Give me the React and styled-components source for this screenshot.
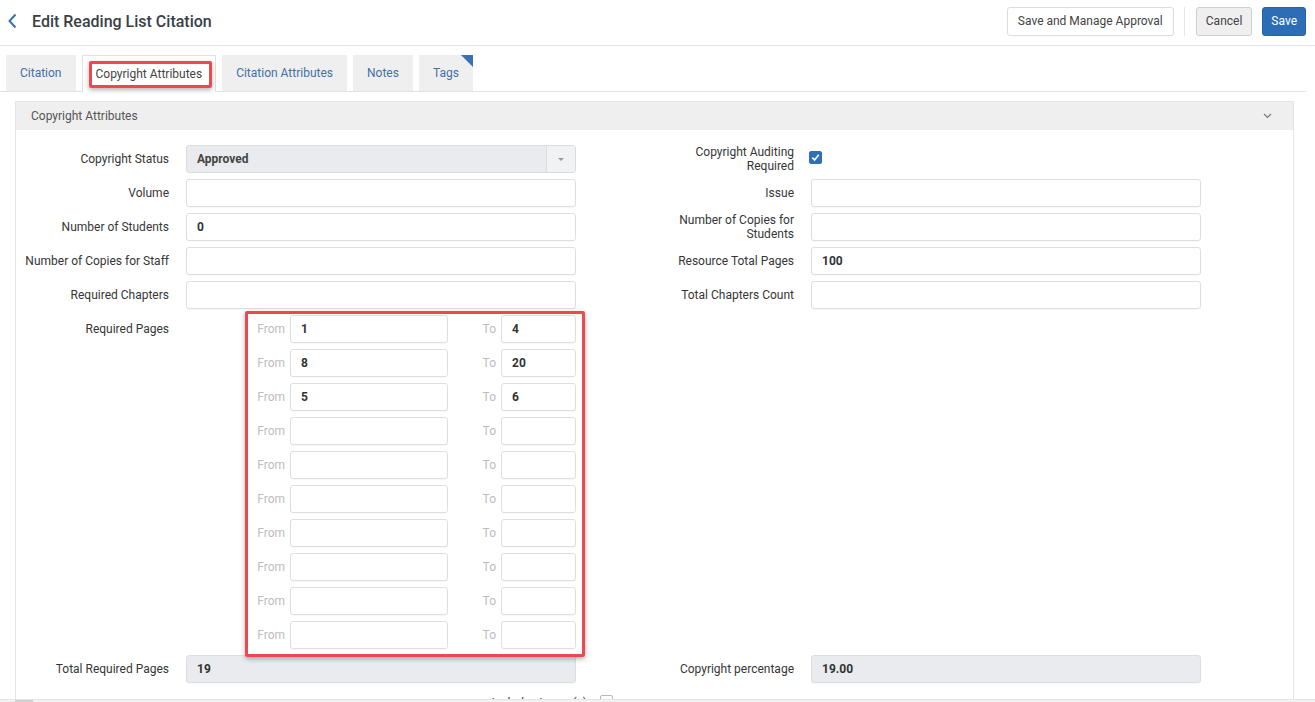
import styled, { createGlobalStyle, css } from "styled-components";

const GlobalStyle = createGlobalStyle`
  html, body {
    margin: 0;
    padding: 0;
    background: #fff;
  }
  * {
    box-sizing: border-box;
  }
`;

const leftFields = [
  { label: "Copyright Status", type: "select", value: "Approved" },
  { label: "Volume", value: "" },
  { label: "Number of Students", value: "0" },
  { label: "Number of Copies for Staff", value: "" },
  { label: "Required Chapters", value: "" },
];

const rightFields = [
  { label: "Copyright Auditing Required", type: "check" },
  { label: "Issue", value: "" },
  { label: "Number of Copies for Students", value: "" },
  { label: "Resource Total Pages", value: "100" },
  { label: "Total Chapters Count", value: "" },
];

const pageRanges = [
  ["1", "4"],
  ["8", "20"],
  ["5", "6"],
  ["", ""],
  ["", ""],
  ["", ""],
  ["", ""],
  ["", ""],
  ["", ""],
  ["", ""],
];

const tabs = [
  { name: "Citation" },
  { name: "Copyright Attributes", active: true },
  { name: "Citation Attributes" },
  { name: "Notes" },
  { name: "Tags", flagged: true },
];

const App = () => {
  const renderControl = (f) => {
    if (f.type === "select") {
      return (
        <SelectBox>
          <SelectValue>{f.value}</SelectValue>
          <SelectArrow>
            <Caret />
          </SelectArrow>
        </SelectBox>
      );
    }
    if (f.type === "check") {
      return (
        <CheckBox checked>
          <svg width="9" height="9" viewBox="0 0 10 10">
            <path d="M1.5 5.2 L4 7.8 L8.6 2" fill="none" stroke="#fff" strokeWidth="1.8" />
          </svg>
        </CheckBox>
      );
    }
    return <TextInput readOnly value={f.value} />;
  };

  return (
    <Page>
      <GlobalStyle />
      <Header>
        <BackButton>
          <svg width="9" height="16" viewBox="0 0 9 16">
            <path d="M7.5 1.5 L1.5 8 L7.5 14.5" fill="none" stroke="#3b6fb6" strokeWidth="2" />
          </svg>
        </BackButton>
        <Title>Edit Reading List Citation</Title>
        <Actions>
          <ActionButton>Save and Manage Approval</ActionButton>
          <Divider />
          <ActionButton $variant="grey">Cancel</ActionButton>
          <ActionButton $variant="primary">Save</ActionButton>
        </Actions>
      </Header>

      <TabBar>
        {tabs.map((t) => (
          <Tab key={t.name} $active={t.active} $flagged={t.flagged}>
            {t.name}
            {t.active && <Highlight $tab />}
          </Tab>
        ))}
      </TabBar>

      <Panel>
        <PanelHeader>
          <span>Copyright Attributes</span>
          <svg width="9" height="6" viewBox="0 0 9 6">
            <path d="M1 1 L4.5 4.5 L8 1" fill="none" stroke="#777" strokeWidth="1.2" />
          </svg>
        </PanelHeader>
        <FormGrid>
          {leftFields.map((f, i) => [
            <Field key={"l" + i} $labelW={153}>
              <Label>{f.label}</Label>
              {renderControl(f)}
            </Field>,
            <Field key={"r" + i} $labelW={120}>
              <Label>{rightFields[i].label}</Label>
              {renderControl(rightFields[i])}
            </Field>,
          ])}

          <Field $labelW={153}>
            <Label $top>Required Pages</Label>
            <Ranges>
              {pageRanges.map(([from, to], i) => (
                <RangeRow key={i}>
                  <RangeLabel>From</RangeLabel>
                  <TextInput readOnly value={from} />
                  <RangeLabel>To</RangeLabel>
                  <TextInput readOnly value={to} />
                </RangeRow>
              ))}
              <Highlight />
            </Ranges>
          </Field>
          <div />

          <Field $labelW={153}>
            <Label>Total Required Pages</Label>
            <TextInput readOnly value="19" $disabled />
          </Field>
          <Field $labelW={120}>
            <Label>Copyright percentage</Label>
            <TextInput readOnly value="19.00" $disabled />
          </Field>

          <Field $labelW={571} $gap={15} $full>
            <Label>Includes image(s)</Label>
            <CheckBox />
          </Field>
        </FormGrid>
      </Panel>
      <ScrollTrack>
        <ScrollThumb />
      </ScrollTrack>
    </Page>
  );
};

const Page = styled.div`
  font-family: Roboto, "Noto Sans", Arial, sans-serif;
  color: #333;
  height: 702px;
  overflow: hidden;
  position: relative;
`;

const Header = styled.div`
  display: flex;
  align-items: center;
  height: 46px;
  padding: 0 9px 3px 8px;
  border-bottom: 1px solid #e4e4e4;
`;

const BackButton = styled.div`
  display: flex;
  align-items: center;
  width: 9px;
  height: 16px;
`;

const Title = styled.h1`
  margin: 0 0 0 15px;
  font-size: 16px;
  font-weight: 500;
  color: #3a3f45;
`;

const Actions = styled.div`
  margin-left: auto;
  display: flex;
  align-items: center;
  gap: 10px;
`;

const Divider = styled.div`
  width: 1px;
  height: 29px;
  background: #e6e6e6;
  margin-right: 1px;
`;

const ActionButton = styled.button`
  font-family: inherit;
  font-size: 12px;
  height: 29px;
  padding: 0 10px;
  border-radius: 3px;
  border: 1px solid #dcdcdc;
  background: #fff;
  color: #444;
  ${(p) =>
    p.$variant === "grey" &&
    css`
      background: #efefef;
      border-color: #cfcfcf;
      padding: 0 9px;
    `}
  ${(p) =>
    p.$variant === "primary" &&
    css`
      background: #2d6db5;
      border-color: #2863a6;
      color: #fff;
      padding: 0 8px;
    `}
`;

const TabBar = styled.div`
  display: flex;
  gap: 6px;
  padding: 9px 0 0 6px;
  margin-right: 9px;
  border-bottom: 1px solid #e2e2e2;
`;

const Tab = styled.div`
  position: relative;
  height: 36px;
  display: flex;
  align-items: center;
  padding: 0 14px;
  font-size: 12px;
  color: #4470a8;
  background: #efefef;
  ${(p) =>
    p.$active &&
    css`
      background: #fff;
      color: #444;
      padding: 0 13px;
      border: 1px solid #e2e2e2;
      border-bottom: none;
      margin-bottom: -1px;
      height: 37px;
    `}
  ${(p) =>
    p.$flagged &&
    css`
      &::after {
        content: "";
        position: absolute;
        top: 0;
        right: 0;
        border-top: 12px solid #3a6fb5;
        border-left: 12px solid transparent;
      }
    `}
`;

const Highlight = styled.div`
  position: absolute;
  pointer-events: none;
  border: 3px solid #e84a4f;
  border-radius: 2px;
  box-shadow: 0 2px 5px rgba(0, 0, 0, 0.3);
  ${(p) =>
    p.$tab
      ? css`
          top: 5px;
          left: 6px;
          right: 3px;
          bottom: 4px;
        `
      : css`
          top: -4px;
          left: 59px;
          right: -9px;
          bottom: -8px;
        `}
`;

const Panel = styled.div`
  margin: 9px 21px 0 15px;
  border: 1px solid #e4e4e4;
  min-height: 700px;
`;

const PanelHeader = styled.div`
  height: 28px;
  display: flex;
  align-items: center;
  justify-content: space-between;
  padding: 0 21px 0 15px;
  background: #efefef;
  font-size: 12px;
  color: #555;
`;

const FormGrid = styled.div`
  display: grid;
  grid-template-columns: 560px 527px;
  column-gap: 98px;
  row-gap: 6px;
  padding-top: 15px;
`;

const Field = styled.div`
  display: grid;
  grid-template-columns: ${(p) => p.$labelW}px 390px;
  column-gap: ${(p) => p.$gap || 17}px;
  align-items: start;
  ${(p) =>
    p.$full &&
    css`
      grid-column: 1 / -1;
    `}
`;

const Label = styled.div`
  display: flex;
  align-items: ${(p) => (p.$top ? "flex-start" : "center")};
  justify-content: flex-end;
  text-align: right;
  min-height: 28px;
  font-size: 12px;
  line-height: ${(p) => (p.$top ? "28px" : "14px")};
  color: #363636;
`;

const TextInput = styled.input`
  width: 100%;
  height: 28px;
  padding: 0 10px;
  border: 1px solid #dedede;
  border-radius: 3px;
  font-family: inherit;
  font-size: 12px;
  font-weight: 700;
  color: #333;
  background: ${(p) => (p.$disabled ? "#e9ebee" : "#fff")};
  outline: none;
  box-shadow: 0 1px 1px rgba(0, 0, 0, 0.03);
`;

const SelectBox = styled.div`
  display: flex;
  height: 28px;
  border: 1px solid #dcdcdc;
  border-radius: 3px;
  background: #e9ebee;
`;

const SelectValue = styled.div`
  flex: 1;
  display: flex;
  align-items: center;
  padding: 0 10px;
  font-size: 12px;
  font-weight: 700;
  color: #444;
`;

const SelectArrow = styled.div`
  width: 29px;
  display: flex;
  align-items: center;
  justify-content: center;
  border-left: 1px solid #dcdcdc;
  background: #f1f2f4;
`;

const Caret = styled.span`
  width: 0;
  height: 0;
  border-left: 3px solid transparent;
  border-right: 3px solid transparent;
  border-top: 3px solid #999;
`;

const CheckBox = styled.div`
  width: 13px;
  height: 13px;
  margin: 6px 0 0 -2px;
  border-radius: 2px;
  display: flex;
  align-items: center;
  justify-content: center;
  border: 1px solid #b8b8b8;
  background: #fff;
  ${(p) =>
    p.checked &&
    css`
      border-color: #2f6fb8;
      background: #2f6fb8;
    `}
`;

const Ranges = styled.div`
  position: relative;
  display: flex;
  flex-direction: column;
  gap: 6px;
`;

const RangeRow = styled.div`
  display: grid;
  grid-template-columns: 104px 158px 53px 75px;
`;

const RangeLabel = styled.div`
  display: flex;
  align-items: center;
  justify-content: flex-end;
  padding-right: 5px;
  font-size: 12px;
  color: #bdbdbd;
`;

const ScrollTrack = styled.div`
  position: absolute;
  left: 0;
  right: 0;
  bottom: 0;
  height: 3px;
  background: #f2f2f2;
  border-top: 1px solid #e6e6e6;
`;

const ScrollThumb = styled.div`
  width: 18px;
  height: 100%;
  margin-left: 15px;
  background: #cfcfcf;
`;

export default App;
